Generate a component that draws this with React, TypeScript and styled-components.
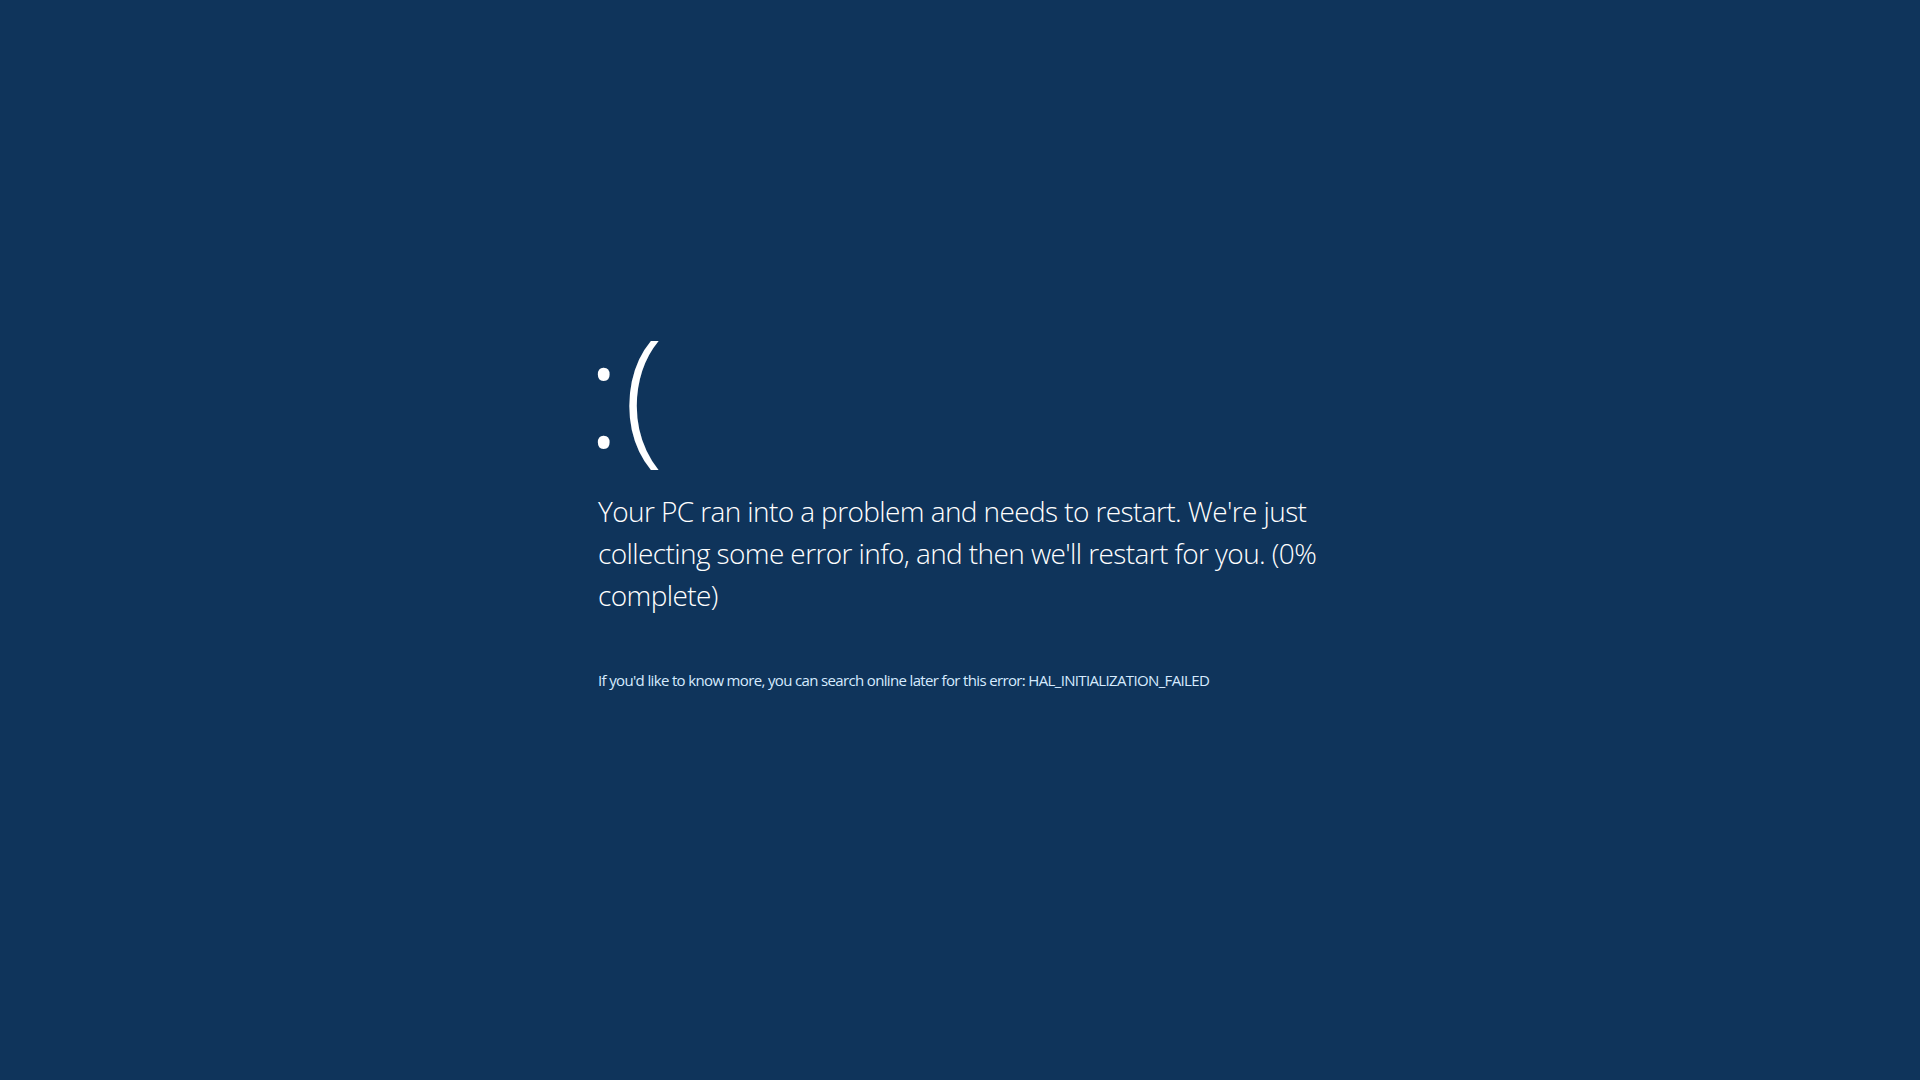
import React from "react";
import styled, { createGlobalStyle } from "styled-components";

const Global = createGlobalStyle`
  html, body {
    margin: 0;
    padding: 0;
    background: #0f345b;
  }
  body {
    font-family: "Open Sans", "Liberation Sans", sans-serif;
  }
`;

const Screen = styled.div`
  width: 1920px;
  height: 1080px;
  background: #0f345b;
  display: flex;
  justify-content: center;
  overflow: hidden;
`;

const Content = styled.div`
  width: 724px;
  padding-top: 305px;
  display: flex;
  flex-direction: column;
`;

const Face = styled.div`
  font-family: "Open Sans", sans-serif;
  font-weight: 300;
  font-size: 148px;
  line-height: 170px;
  color: #ffffff;
  height: 170px;
  margin-left: -12px;
  letter-spacing: 2px;
`;

const Message = styled.p`
  margin: 0;
  margin-top: 15px;
  font-family: "Open Sans", sans-serif;
  font-weight: 300;
  font-size: 28px;
  line-height: 42px;
  letter-spacing: -0.6px;
  color: #ffffff;
`;

const Detail = styled.p`
  margin: 0;
  margin-top: 54px;
  font-family: "Open Sans", sans-serif;
  font-weight: 400;
  font-size: 15px;
  line-height: 20px;
  letter-spacing: -0.65px;
  color: #d6ebff;
`;

export default function App() {
  return (
    <>
      <Global />
      <Screen>
        <Content>
          <Face>:(</Face>
          <Message>
            Your PC ran into a problem and needs to restart. We're just collecting some error info, and then we'll
            restart for you. (0% complete)
          </Message>
          <Detail>
            If you'd like to know more, you can search online later for this error: HAL_INITIALIZATION_FAILED
          </Detail>
        </Content>
      </Screen>
    </>
  );
}
